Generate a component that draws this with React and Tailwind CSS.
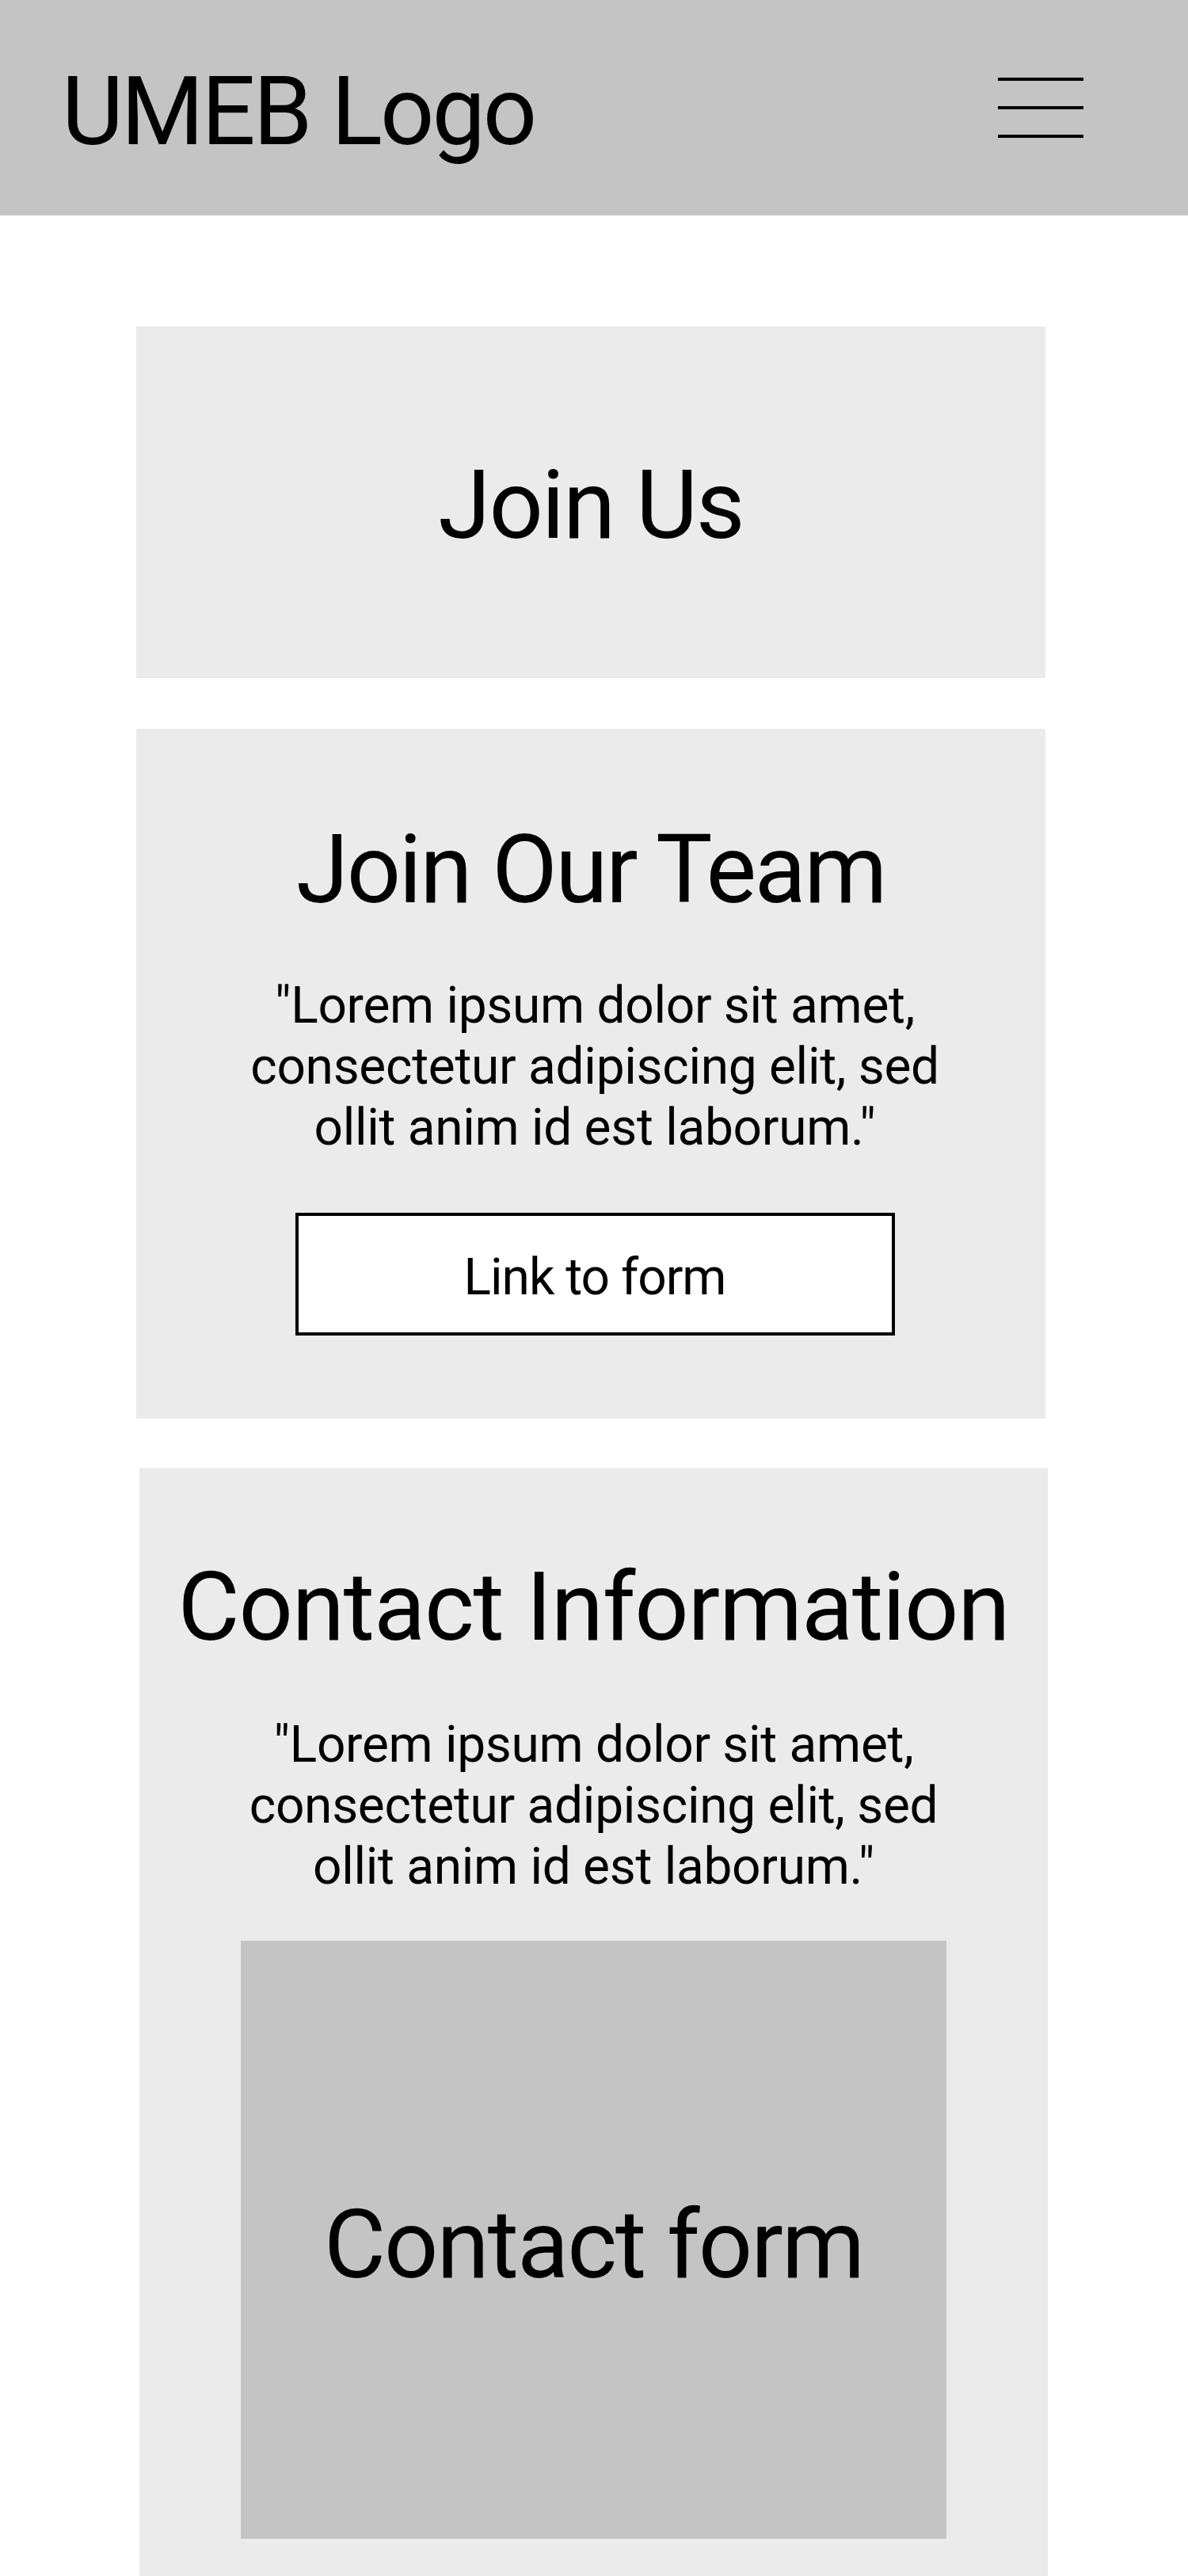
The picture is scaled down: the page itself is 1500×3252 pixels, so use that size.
import React from "react";

const font = { fontFamily: "Roboto, 'Liberation Sans', sans-serif" };

function Hamburger() {
  return (
    <div className="flex flex-col gap-[32px] w-[108px]">
      <span className="block h-[4px] bg-black" />
      <span className="block h-[4px] bg-black" />
      <span className="block h-[4px] bg-black" />
    </div>
  );
}

function Lorem() {
  return (
    <p className="text-[64px] leading-[76.8px] text-center text-black tracking-[-0.3px]">
      <span className="block whitespace-nowrap">"Lorem ipsum dolor sit amet,</span>
      <span className="block whitespace-nowrap">consectetur adipiscing elit, sed</span>
      <span className="block whitespace-nowrap">ollit anim id est laborum."</span>
    </p>
  );
}

export default function App() {
  return (
    <div className="w-full bg-white font-normal" style={font}>
      <header className="h-[272px] bg-[#c4c4c4] flex items-center justify-between pl-[78px] pr-[132px]">
        <span className="text-[120px] leading-none pt-[10px] tracking-[-3px] text-black whitespace-nowrap">
          UMEB Logo
        </span>
        <Hamburger />
      </header>

      <main className="flex flex-col items-start pl-[172px] pt-[140px]">
        <section className="w-[1148px] h-[444px] bg-[#ebebeb] flex items-center justify-center">
          <h1 className="text-[120px] leading-none tracking-[-2px] text-black pt-[8px]">Join Us</h1>
        </section>

        <section className="mt-[64px] w-[1148px] bg-[#ebebeb] flex flex-col items-center pt-[118px] pb-[105px]">
          <h2 className="text-[120px] leading-none tracking-[-2.5px] text-black whitespace-nowrap">
            Join Our Team
          </h2>
          <div className="mt-[74px] ml-[10px]">
            <Lorem />
          </div>
          <a className="mt-[69px] ml-[10px] w-[757px] h-[155px] border-4 border-black bg-white flex items-center justify-center text-[64px] leading-none tracking-[-1px] text-black pt-[8px]">
            Link to form
          </a>
        </section>

        <section className="mt-[62px] ml-[4px] w-[1147px] bg-[#ebebeb] flex flex-col items-center pt-[116px] pb-[49px]">
          <h2 className="text-[120px] leading-none tracking-[-1.2px] text-black whitespace-nowrap">
            Contact Information
          </h2>
          <div className="mt-[76px]">
            <Lorem />
          </div>
          <div className="mt-[54px] w-[891px] h-[755px] bg-[#c4c4c4] flex items-center justify-center">
            <span className="text-[120px] leading-none tracking-[-2px] text-black pt-[14px]">Contact form</span>
          </div>
        </section>
      </main>
    </div>
  );
}
